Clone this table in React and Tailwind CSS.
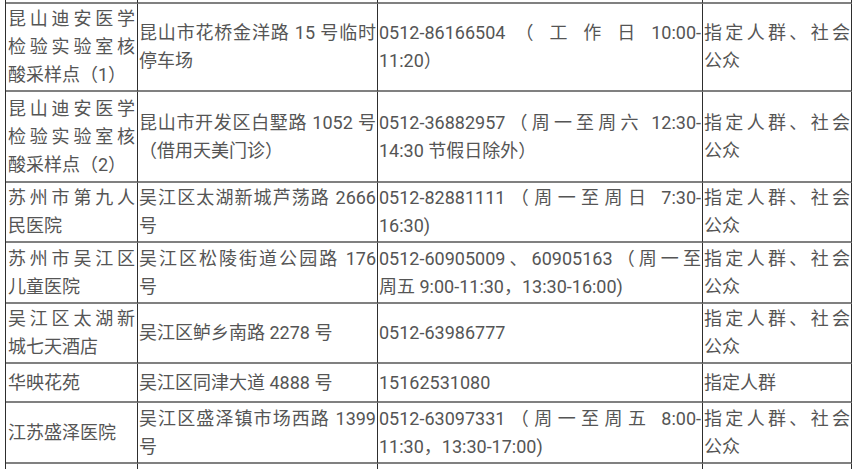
import React from 'react';

// cells: lines as shown; a line given as { t, words: true } only stretches at spaces
const rows = [
  {
    h: 'h-[88px]',
    cells: [
      ['昆山迪安医学', '检验实验室核', '酸采样点（1）'],
      ['昆山市花桥金洋路 15 号临时', '停车场'],
      [{ t: '0512-86166504 （ 工 作 日 10:00-', words: true }, '11:20）'],
      ['指定人群、社会', '公众'],
    ],
  },
  {
    h: 'h-[91px]',
    cells: [
      ['昆山迪安医学', '检验实验室核', '酸采样点（2）'],
      ['昆山市开发区白墅路 1052 号', '（借用天美门诊）'],
      ['0512-36882957（周一至周六 12:30-', '14:30 节假日除外）'],
      ['指定人群、社会', '公众'],
    ],
  },
  {
    h: 'h-[60px]',
    cells: [
      ['苏州市第九人', '民医院'],
      ['吴江区太湖新城芦荡路 2666', '号'],
      ['0512-82881111（周一至周日 7:30-', '16:30)'],
      ['指定人群、社会', '公众'],
    ],
  },
  {
    h: 'h-[61px]',
    cells: [
      ['苏州市吴江区', '儿童医院'],
      ['吴江区松陵街道公园路 176', '号'],
      ['0512-60905009、60905163（周一至', '周五 9:00-11:30，13:30-16:00)'],
      ['指定人群、社会', '公众'],
    ],
  },
  {
    h: 'h-[60px]',
    cells: [
      ['吴江区太湖新', '城七天酒店'],
      ['吴江区鲈乡南路 2278 号'],
      ['0512-63986777'],
      ['指定人群、社会', '公众'],
    ],
  },
  {
    h: 'h-[39px]',
    cells: [
      ['华映花苑'],
      ['吴江区同津大道 4888 号'],
      ['15162531080'],
      ['指定人群'],
    ],
  },
  {
    h: 'h-[61px]',
    cells: [
      ['江苏盛泽医院'],
      ['吴江区盛泽镇市场西路 1399', '号'],
      ['0512-63097331（周一至周五 8:00-', '11:30，13:30-17:00)'],
      ['指定人群、社会', '公众'],
    ],
  },
];

const Cell = ({ lines, h, first }) => (
  <div
    className={`${h} flex flex-col justify-center border-b-2 border-b-[#808080] border-r border-r-[#2e2e2e] ${
      first ? 'px-[2px]' : 'px-[1px]'
    }`}
  >
    {lines.map((line, i) => {
      const text = typeof line === 'string' ? line : line.t;
      const words = typeof line !== 'string' && line.words;
      const last = i === lines.length - 1;
      return (
        <div
          key={i}
          className={`whitespace-nowrap ${
            last ? 'text-left' : 'text-justify [text-align-last:justify]'
          } ${words ? '[text-justify:inter-word]' : ''}`}
        >
          {text}
        </div>
      );
    })}
  </div>
);

export default function App() {
  return (
    <div className="w-[857px] h-[469px] overflow-hidden bg-white">
      <div
        className="ml-[5px] w-[847px] grid grid-cols-[132px_240px_325px_149px] border-l border-l-[#2e2e2e] text-[18px] leading-[28px] text-[#555555]"
        style={{ fontFamily: 'Roboto, "Noto Sans CJK SC", sans-serif' }}
      >
        {/* tail of the row above */}
        {[0, 1, 2, 3].map((i) => (
          <div key={`top-${i}`} className="h-[4px] border-b-2 border-b-[#808080] border-r border-r-[#2e2e2e]" />
        ))}

        {rows.map((row, r) =>
          row.cells.map((lines, c) => (
            <Cell key={`${r}-${c}`} lines={lines} h={row.h} first={c === 0} />
          ))
        )}

        {/* start of the next row */}
        {[0, 1, 2, 3].map((i) => (
          <div key={`bottom-${i}`} className="h-[12px] border-r border-r-[#2e2e2e]" />
        ))}
      </div>
    </div>
  );
}
